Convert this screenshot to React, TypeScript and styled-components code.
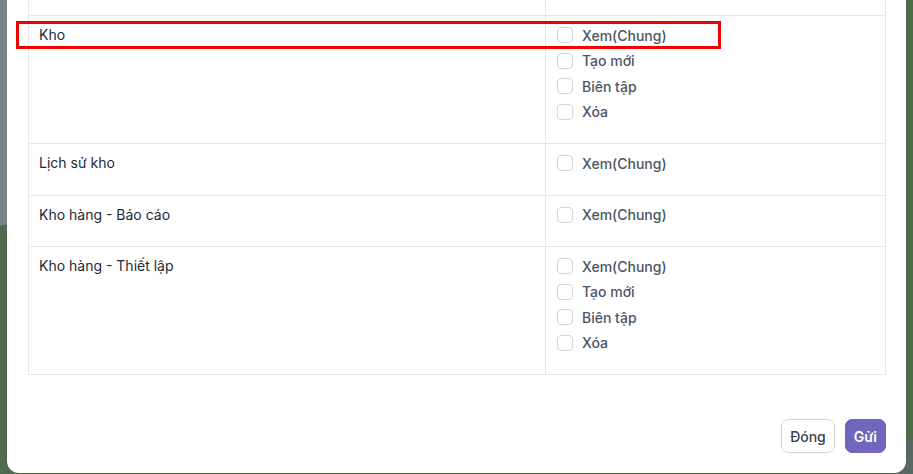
import styled, { createGlobalStyle } from "styled-components";

const GlobalStyle = createGlobalStyle`
  html, body {
    margin: 0;
    padding: 0;
    height: 100%;
  }
  body {
    font-family: Inter, "Noto Sans", sans-serif;
    background:
      linear-gradient(#7a7f8a 0 225px, #4f6a4d 225px) left top / 20px 100% no-repeat,
      linear-gradient(#4e6a4b 0 440px, #5a6862 440px) right top / 20px 100% no-repeat,
      #4f6a4d;
  }
`;

type Permission = {
  name: string;
  actions: string[];
};

const ALL = ["Xem(Chung)", "Tạo mới", "Biên tập", "Xóa"];

const rows: Permission[] = [
  { name: "Kho", actions: ALL },
  { name: "Lịch sử kho", actions: ["Xem(Chung)"] },
  { name: "Kho hàng - Báo cáo", actions: ["Xem(Chung)"] },
  { name: "Kho hàng - Thiết lập", actions: ALL },
];

export default function App() {
  return (
    <>
      <GlobalStyle />
      <Screen>
        <Modal>
          <Table>
            {/* tail of the row scrolled above the viewport */}
            <Row $cut>
              <NameCell />
              <ActionCell />
            </Row>
            {rows.map((row) => (
              <Row key={row.name}>
                <NameCell>{row.name}</NameCell>
                <ActionCell>
                  {row.actions.map((a) => (
                    <CheckItem key={a}>
                      <Box type="checkbox" />
                      <span>{a}</span>
                    </CheckItem>
                  ))}
                </ActionCell>
                {row.name === "Kho" && <Highlight />}
              </Row>
            ))}
          </Table>
          <Footer>
            <CloseButton>Đóng</CloseButton>
            <SubmitButton>Gửi</SubmitButton>
          </Footer>
        </Modal>
      </Screen>
    </>
  );
}

const Screen = styled.div`
  height: 474px;
  display: flex;
  flex-direction: column;
  justify-content: flex-end;
  align-items: flex-start;
  overflow: hidden;
  padding: 0 0 1px 7px;
  box-sizing: border-box;
`;

const Modal = styled.div`
  width: 899px;
  box-sizing: border-box;
  background: #ffffff;
  border-radius: 0 0 12px 12px;
  padding: 0 20px 20px 21px;
  flex-shrink: 0;
`;

const Table = styled.div`
  border: 1px solid #e5e7eb;
  border-top: none;
`;

const Row = styled.div<{ $cut?: boolean }>`
  position: relative;
  display: grid;
  grid-template-columns: 517px 1fr;
  border-top: 1px solid #e5e7eb;
  height: ${(p) => (p.$cut ? "16px" : "auto")};
  &:first-child {
    border-top: none;
  }
`;

const NameCell = styled.div`
  padding: 9px 10px;
  font-size: 14px;
  line-height: 20px;
  color: #1f2937;
  border-right: 1px solid #e5e7eb;
`;

const ActionCell = styled.div`
  padding: 9px 11px 16px;
  display: flex;
  flex-direction: column;
`;

const CheckItem = styled.label`
  display: flex;
  align-items: center;
  gap: 9px;
  height: 20px;
  margin-bottom: 5.5px;
  font-size: 14px;
  font-weight: 500;
  color: #4b5563;
`;

const Box = styled.input`
  appearance: none;
  margin: 0;
  width: 16px;
  height: 16px;
  border: 1px solid #d1d5db;
  border-radius: 4px;
  background: #fff;
  box-sizing: border-box;
`;

const Highlight = styled.div`
  position: absolute;
  top: 5px;
  left: -13px;
  width: 705px;
  height: 28px;
  border: 3px solid #ee0000;
  box-sizing: border-box;
  pointer-events: none;
`;

const Footer = styled.div`
  display: flex;
  justify-content: flex-end;
  gap: 10px;
  margin-top: 44px;
`;

const BaseButton = styled.button`
  height: 34px;
  border-radius: 7px;
  font-family: Inter, "Noto Sans", sans-serif;
  font-size: 14px;
  padding: 0 8px;
  cursor: pointer;
`;

const CloseButton = styled(BaseButton)`
  background: #ffffff;
  border: 1px solid #d1d5db;
  color: #374151;
  font-weight: 500;
`;

const SubmitButton = styled(BaseButton)`
  background: #7166bd;
  border: 1px solid #7166bd;
  color: #ffffff;
  font-weight: 600;
`;
